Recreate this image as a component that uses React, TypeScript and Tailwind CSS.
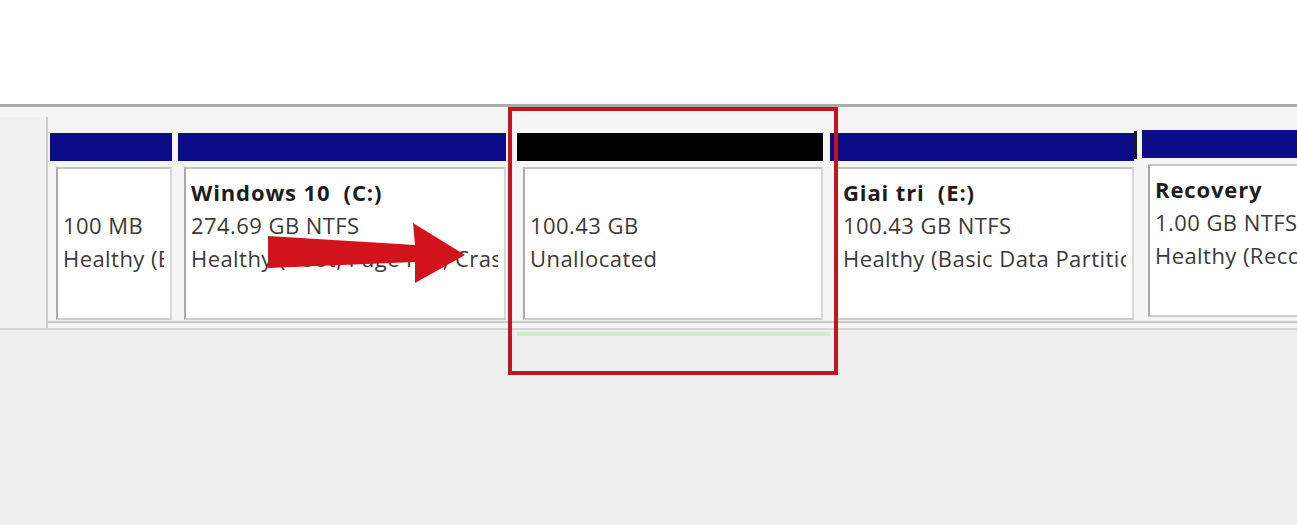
import React from 'react';

interface Part {
  width: string;
  bar: string;
  title?: string;
  size: string;
  status: string;
  shift?: string;
}

const parts: Part[] = [
  { width: 'w-[122px]', bar: 'bg-[#0c0c88]', size: '100 MB', status: 'Healthy (EFI System Partition)' },
  {
    width: 'w-[328px]',
    bar: 'bg-[#0c0c88]',
    title: 'Windows 10  (C:)',
    size: '274.69 GB NTFS',
    status: 'Healthy (Boot, Page File, Crash Dump, Basic Data Partition)',
  },
  { width: 'w-[306px]', bar: 'bg-black', size: '100.43 GB', status: 'Unallocated' },
  {
    width: 'w-[304px]',
    bar: 'bg-[#0c0c88]',
    title: 'Giai tri  (E:)',
    size: '100.43 GB NTFS',
    status: 'Healthy (Basic Data Partition)',
  },
  {
    width: 'w-[200px]',
    bar: 'bg-[#0c0c88]',
    title: 'Recovery',
    size: '1.00 GB NTFS',
    status: 'Healthy (Recovery Partition)',
    shift: '-mt-[3px]',
  },
];

function PartitionBox({ p }: { p: Part }) {
  return (
    <div className={`flex flex-col shrink-0 ${p.width} ${p.shift ?? ''}`}>
      <div className={`h-[28px] ${p.bar}`} />
      <div className="mt-[6px] ml-[6px] h-[153px] bg-white border-2 border-t-[#c4c4c4] border-l-[#a9a9a9] border-r-[#d8d8d8] border-b-[#cdcdcd] pt-[7px] pl-[5px] pr-[6px]">
        <div className="overflow-hidden whitespace-pre text-[22px] leading-[33px] tracking-[0.02em] text-[#3a3a3a]">
          <div className="font-bold tracking-[0.04em] text-[#1c1c1c] h-[33px]">{p.title ?? ''}</div>
          <div>{p.size}</div>
          <div>{p.status}</div>
        </div>
      </div>
    </div>
  );
}

export default function App() {
  return (
    <div className="relative w-[1297px] h-[525px] overflow-hidden bg-[#efefef] font-['Open_Sans','Noto_Sans',sans-serif]">
      <div className="h-[104px] bg-white" />

      <div className="flex h-[226px] border-t-[3px] border-[#aaaaaa] border-b-2 border-b-[#d4d4d4] bg-[#f5f5f5]">
        <div className="w-[48px] shrink-0 mt-[10px] border-r-2 border-[#cacaca] bg-[#f0f0f0]" />
        <div className="flex flex-1 items-start pt-[26px] pl-[2px] pb-[1px] self-start border-b-2 border-[#c6c6c6]">
          <PartitionBox p={parts[0]} />
          <div className="w-[6px] shrink-0" />
          <PartitionBox p={parts[1]} />
          <div className="w-[11px] shrink-0" />
          <PartitionBox p={parts[2]} />
          <div className="w-[7px] shrink-0" />
          <PartitionBox p={parts[3]} />
          <div className="w-[8px] shrink-0 flex justify-start">
            <div className="w-[3px] h-[28px] -mt-[2px] bg-[#1a1a1a]" />
          </div>
          <PartitionBox p={parts[4]} />
        </div>
      </div>

      <div className="ml-[517px] mt-[2px] h-[4px] w-[313px] bg-[#cdeec6]" />

      {/* annotation: red arrow */}
      <svg className="absolute left-[260px] top-[215px]" width="215" height="75" viewBox="0 0 215 75">
        <polygon points="8,21 155,30 153,8 205,40 155,68 155,47 8,53" fill="#d3131b" />
      </svg>

      {/* annotation: red highlight box */}
      <div className="absolute left-[508px] top-[107px] w-[330px] h-[268px] border-4 border-[#c1161d]" />
    </div>
  );
}
